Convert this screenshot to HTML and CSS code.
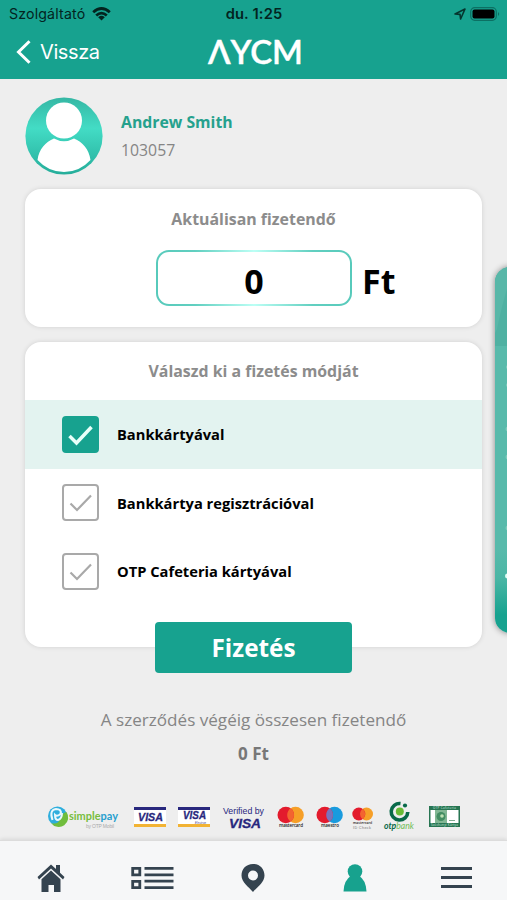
FILE: index.html
```html
<!DOCTYPE html>
<html lang="hu">
<head>
<meta charset="utf-8">
<title>AYCM</title>
<link rel="stylesheet" href="styles.css">
</head>
<body>
<div class="app">
  <header class="header">
    <div class="status">
      <span class="carrier"><span class="carrier-name">Szolgáltató</span>
        <svg width="19" height="14" viewBox="0 0 19 14" fill="none" stroke="#03241f" stroke-width="2.8"><path d="M1.2 5.2Q9.5-2.2 17.8 5.2M4.2 8.5Q9.5 3.8 14.8 8.5"/><path d="M6.2 10.3Q9.5 7.4 12.8 10.3L9.5 13.6Z" fill="#03241f" stroke="none"/></svg>
      </span>
      <span class="time">du. 1:25</span>
      <span class="power">
        <svg width="12" height="12" viewBox="0 0 12 12"><path d="M1 6L11 1L6.6 11L6 6.4Z" fill="none" stroke="#05352e" stroke-width="1.6" stroke-linejoin="round"/></svg>
        <svg width="31" height="14" viewBox="0 0 31 14"><rect x=".7" y=".7" width="25.6" height="12.6" rx="4" fill="none" stroke="#0c7063" stroke-width="1.2"/><rect x="2.5" y="2.5" width="22" height="9" rx="2" fill="#000"/><path d="M28 5Q30.4 7 28 9Z" fill="#0c7063"/></svg>
      </span>
    </div>
    <div class="navbar">
      <a class="back"><svg width="16" height="24" viewBox="0 0 16 24"><path d="M13.500 1.200L2.500 12L13.500 22.800" fill="none" stroke="#fff" stroke-width="3"/></svg><span>Vissza</span></a>
      <svg class="brand" width="94" height="26" viewBox="0 0 94 26"><text x="0" y="24.500" textLength="95" lengthAdjust="spacingAndGlyphs">ΛYCM</text></svg>
    </div>
  </header>

  <main class="content">
    <section class="profile">
      <svg width="78" height="78" viewBox="0 0 78 78"><defs><linearGradient id="av" x2="0" y2="1"><stop offset="0" stop-color="#35b7a4"/><stop offset=".4" stop-color="#43dcc5"/><stop offset="1" stop-color="#25ad9a"/></linearGradient></defs><circle cx="39" cy="39" r="38.600" fill="url(#av)"/><circle cx="39" cy="23.500" r="18" fill="#fff"/><path d="M12.500 63C14 52 20.500 45 29 41.500Q39 47 49 41.500C57.500 45 64 52 65.500 63Q54.500 75 39 75T12.500 63Z" fill="#fff"/></svg>
      <div><div class="name">Andrew Smith</div><div class="id">103057</div></div>
    </section>

    <section class="card amount-card">
      <h2>Aktuálisan fizetendő</h2>
      <div class="amount"><div class="amount-box">0</div><span class="unit">Ft</span></div>
    </section>

    <section class="card methods">
      <h2>Válaszd ki a fizetés módját</h2>
      <div class="option selected"><svg class="box" viewBox="2 2 33 33"><path d="M7.500 20L14.500 27L29.500 11"/></svg><span>Bankkártyával</span></div>
      <div class="option"><svg class="box" viewBox="2 2 33 33"><path d="M8.500 19.500L15 26L29 11.500"/></svg><span>Bankkártya regisztrációval</span></div>
      <div class="option"><svg class="box" viewBox="2 2 33 33"><path d="M8.500 19.500L15 26L29 11.500"/></svg><span>OTP Cafeteria kártyával</span></div>
    </section>
    <button class="pay">Fizetés</button>

    <p class="total">A szerződés végéig összesen fizetendő</p>
    <p class="total-value">0 Ft</p>

    <div class="logos">
      <svg width="75" height="34" viewBox="0 0 75 34"><circle cx="9.500" cy="16" r="9.500" fill="#2eaedd"/><path d="M18.500 12A9.500 9.500 0 0 1 3 23Q10 25 12 19T18.500 12Z" fill="#70bd3d"/><path d="M4.500 20Q1 10 8 9Q14 9 12.500 14Q9 17 7 15Q7 20 10 20Q14 19 14 13" fill="none" stroke="#eaf8fc" stroke-width="2"/><text x="21" y="20" class="simple" textLength="49" lengthAdjust="spacingAndGlyphs"><tspan fill="#77bd3c">simple</tspan><tspan fill="#269fce">pay</tspan></text><text x="38" y="28" class="tiny" textLength="28">by OTP Mobil</text></svg>
      <svg width="33" height="34" viewBox="0 0 33 34"><path fill="#fff" d="M0 7H32V27H0Z"/><path fill="#28277d" d="M0 7H32V10H0Z"/><path fill="#f2b334" d="M0 24H32V27H0Z"/><text x="4" y="21" class="visa" textLength="25" lengthAdjust="spacingAndGlyphs">VISA</text></svg>
      <svg width="33" height="34" viewBox="0 0 33 34"><path fill="#fff" d="M0 7H32V27H0Z"/><path fill="#28277d" d="M0 7H32V10H0Z"/><path fill="#f2b334" d="M0 24H32V27H0Z"/><text x="5" y="19.300" class="visa medium" textLength="23" lengthAdjust="spacingAndGlyphs">VISA</text><text x="17" y="23.800" class="electron" textLength="11">Electron</text></svg>
      <svg width="44" height="34" viewBox="0 0 44 34"><text x="1" y="13.500" class="verified" textLength="41" lengthAdjust="spacingAndGlyphs">Verified by</text><text x="7" y="27.500" class="visa large" textLength="32" lengthAdjust="spacingAndGlyphs">VISA</text></svg>
      <svg width="28" height="34" viewBox="0 0 28 34"><circle cx="18.500" cy="15" r="8.300" fill="#f69f27"/><circle cx="8.800" cy="15" r="8.300" fill="#e31b2d"/><path d="M13.600 8.300a8.300 8.300 0 0 1 0 13.400a8.300 8.300 0 0 1 0-13.400Z" fill="#f36430"/><text x="2" y="27" class="brandname" textLength="24">mastercard</text></svg>
      <svg width="25" height="34" viewBox="0 0 25 34"><circle cx="18.500" cy="15" r="8.300" fill="#199bde"/><circle cx="8.800" cy="15" r="8.300" fill="#e31b2d"/><path d="M13.600 8.300a8.300 8.300 0 0 1 0 13.400a8.300 8.300 0 0 1 0-13.400Z" fill="#7973bb"/><text x="5" y="27" class="brandname" textLength="18">maestro</text></svg>
      <svg width="21" height="34" viewBox="0 0 21 34"><circle cx="14.500" cy="14" r="6.500" fill="#f69f27"/><circle cx="6.800" cy="14" r="6.500" fill="#e31b2d"/><path d="M10.600 8.800a6.500 6.500 0 0 1 0 10.400a6.500 6.500 0 0 1 0-10.400Z" fill="#f36430"/><text x="1" y="23.800" class="brandname small" textLength="19">mastercard</text><text x="1" y="28.500" class="idcheck" textLength="18">ID Check</text></svg>
      <svg width="34" height="34" viewBox="0 0 34 34"><path d="M16.500 3.500A8.300 8.300 0 1 0 23.800 12" fill="none" stroke="#086949" stroke-width="3.600"/><circle cx="15.800" cy="11.500" r="4" fill="#68bb35"/><circle cx="21" cy="5.500" r="2.100" fill="#086949"/><text x="0" y="29" class="otp" textLength="30" lengthAdjust="spacingAndGlyphs"><tspan fill="#086949" font-weight="700">otp</tspan><tspan fill="#70bd56">bank</tspan></text></svg>
      <svg width="31" height="34" viewBox="0 0 31 34"><path d="M0 6H31V27H0Z" fill="#277552"/><path d="M1.500 10H29.500V23H1.500Z" fill="#fff"/><path d="M6 10H18V23H6Z" fill="#82b794"/><circle cx="12" cy="16.500" r="4.500" fill="#438d62"/><circle cx="13" cy="16" r="1.800" fill="#bee0b4"/><path d="M20 20h6v1h-6z" fill="#80aa91"/><text x="4" y="9.200" class="cafe" textLength="23">OTP Cafeteria</text><text x="2" y="26.200" class="cafe" textLength="27">Széchenyi Kártya</text></svg>
    </div>
  </main>

  <aside class="drawer"><svg width="12" height="366" viewBox="0 0 12 366"><path d="M0 0H12V79H0Z" fill="#4fb1a2"/><path d="M0 0H12V22Q7 38 2 62L0 66Z" fill="#58b7a8"/><g fill="#7dcaba"><circle cx="13" cy="100" r="2"/><circle cx="13" cy="118" r="2"/><circle cx="13" cy="162" r="2.500"/><circle cx="13" cy="190" r="2.500"/><circle cx="13" cy="261" r="2.500"/></g><circle cx="12.500" cy="309" r="2.500" fill="#e3fff7"/></svg></aside>

  <nav class="tabs">
    <a><svg width="30" height="30" viewBox="0 0 30 30" fill="#34434f"><path d="M1.500 14L15 1.500L20 6V2H24V9.800L28.500 14L27 16.500L15 5.500L3 16.500Z"/><path d="M5.500 16.300L15 7.500L24.500 16.300V29H18V22H12.500V29H5.500Z"/></svg></a>
    <a><svg width="43" height="24" viewBox="0 0 43 24"><g fill="none" stroke="#34434f" stroke-width="2.800"><path d="M1.700 2.400H8.800V8.800H1.700ZM1.700 15.300H8.800V21.700H1.700Z"/><path d="M13.500 2.400H42.500M13.500 8.800H42.500M13.500 15.200H42.500M13.500 21.600H42.500"/></g></svg></a>
    <a><svg width="26" height="30" viewBox="0 0 26 30"><path d="M13 1C6 1 1.500 6 1.500 12.500C1.500 19.500 9 24 13 29C17 24 24.500 19.500 24.500 12.500C24.500 6 20 1 13 1ZM13 7.500a5 5 0 1 1 0 10a5 5 0 0 1 0-10Z" fill="#34434f" fill-rule="evenodd"/></svg></a>
    <a><svg width="24" height="30" viewBox="0 0 24 30" fill="#17a28e"><circle cx="12" cy="8.500" r="7.300"/><path d="M7.800 13H16.200Q23 17 23.500 28.500H.5Q1 17 7.800 13Z"/></svg></a>
    <a><svg width="31" height="24" viewBox="0 0 31 24"><path d="M0 2.500H31M0 11.500H31M0 20.500H31" stroke="#34434f" stroke-width="3"/></svg></a>
  </nav>
</div>
</body>
</html>
```
FILE: styles.css
```css
* { box-sizing: border-box; }
body { margin: 0; font-family: "Open Sans", "Liberation Sans", sans-serif; }
h2, p { margin: 0; }
svg { display: block; flex: none; }
.app { position: relative; width: 507px; height: 900px; overflow: hidden; display: flex; flex-direction: column; background: #eeeeee; }
.header { height: 79px; background: #17a28f; flex: none; font-family: Inter, sans-serif; }
.status { height: 27px; display: grid; grid-template-columns: 1fr auto 1fr; align-items: center; padding: 0 8px 0 9px; color: #03241f; font-size: 14.2px; }
.carrier { display: flex; align-items: center; gap: 7px; }
.carrier-name { letter-spacing: .15px; }
.time { font-weight: 600; font-size: 14.7px; letter-spacing: .15px; }
.power { display: flex; justify-content: flex-end; align-items: center; gap: 4px; margin-right: -2px; }
.navbar { height: 50px; display: grid; grid-template-columns: 1fr auto 1fr; align-items: center; padding: 0 16px; }
.back { display: flex; align-items: center; gap: 8px; color: #fff; font-size: 20px; line-height: 26px; letter-spacing: -.4px; }
.brand { margin-left: 2px; overflow: visible; fill: #fff; stroke: #fff; stroke-width: .4; font: 600 32.5px Lato, "Open Sans", sans-serif; }
.content { height: 761px; flex: none; padding: 18px 25px 0; display: flex; flex-direction: column; }
.profile { height: 78px; display: flex; gap: 18px; flex: none; }
.name { margin-top: 14px; line-height: 22px; font-size: 15.8px; font-weight: 700; color: #25a18d; }
.id { margin-top: 6px; line-height: 22px; font-size: 15.8px; color: #858585; }
.card { background: #fff; border-radius: 16px; width: 457px; box-shadow: 0 0 5px rgba(0, 0, 0, .12); flex: none; overflow: hidden; }
.card h2 { color: #8c8c8c; font-size: 15.9px; line-height: 22px; font-weight: 700; text-align: center; }
.amount-card { margin-top: 14px; height: 138px; padding-top: 19px; }
.amount { display: flex; align-items: center; gap: 10px; margin: 20px 0 0 131px; height: 56px; color: #000; font-size: 34px; font-weight: 700; }
.amount-box { width: 196px; height: 56px; border: 2px solid transparent; border-radius: 13px; background: linear-gradient(#fff, #fff) padding-box, linear-gradient(90deg, #57cabb, #61cfc0 20%, #bcfff5 50%, #61cfc0 80%, #57cabb) border-box; text-align: center; line-height: 58px; }
.unit { line-height: 60px; padding-top: 5px; }
.methods { margin-top: 15px; height: 305px; padding-top: 18px; }
.methods h2 { height: 40px; }
.option { height: 68.5px; display: flex; align-items: center; padding-left: 37px; gap: 18px; color: #000; font-size: 14.7px; font-weight: 700; }
.selected { background: #e3f3f0; }
.box { width: 37px; height: 37px; border: 2px solid #a9a9a9; border-radius: 4px; fill: none; stroke: #a9a9a9; stroke-width: 2.2; }
.selected .box { background: #17a28f; border-color: #17a28f; stroke: #e8fff9; stroke-width: 3.5; }
.pay { position: relative; width: 197px; height: 51px; margin: -25px auto 0; padding: 0; border: 0; border-radius: 4px; background: #17a28f; color: #fff; font: 700 24.3px/51px "Open Sans", sans-serif; flex: none; }
.total { margin-top: 36px; text-align: center; color: #858585; font-size: 17.1px; line-height: 22px; white-space: nowrap; }
.total-value { margin-top: 12px; text-align: center; color: #777; font-size: 17px; line-height: 22px; font-weight: 700; }
.logos { display: flex; gap: 11px; margin: 35px 0 0 23px; }
.logos svg { overflow: visible; }
.simple { font: 700 11px Lato, sans-serif; }
.tiny { font: 5px "Liberation Sans", sans-serif; fill: #aaa; }
.visa { font: italic 700 11.5px "Liberation Sans", sans-serif; fill: #28277d; stroke: #28277d; stroke-width: .3; }
.medium { font-size: 10.5px; }
.large { font-size: 13.2px; }
.electron { font: italic 2.6px "Liberation Sans", sans-serif; fill: #28277d; }
.verified { font: 9.5px "Liberation Sans", sans-serif; fill: #28277d; }
.brandname { font: 600 4.6px "Open Sans", sans-serif; fill: #222; }
.small { font-size: 3.4px; }
.idcheck { font: 3.8px "Liberation Sans", sans-serif; fill: #777; }
.otp { font: italic 9px Lato, sans-serif; }
.cafe { font: 3px "Open Sans", sans-serif; fill: #d7eee0; }
.drawer { position: absolute; left: 495px; top: 267px; width: 30px; height: 366px; border-radius: 18px; overflow: hidden; background: linear-gradient(#58baab, #58baab 77%, #4bb6a5 85%, #17a28f 95%); box-shadow: 0 0 6px rgba(0, 0, 0, .45); }
.tabs { height: 60px; display: grid; grid-template-columns: repeat(5, 1fr); background: #f6f7f8; border-top: 1px solid #dcdcdc; box-shadow: 0 -1px 4px rgba(0, 0, 0, .1); flex: none; padding-top: 15px; }
.tabs a { height: 44px; display: flex; align-items: center; justify-content: center; }
```
